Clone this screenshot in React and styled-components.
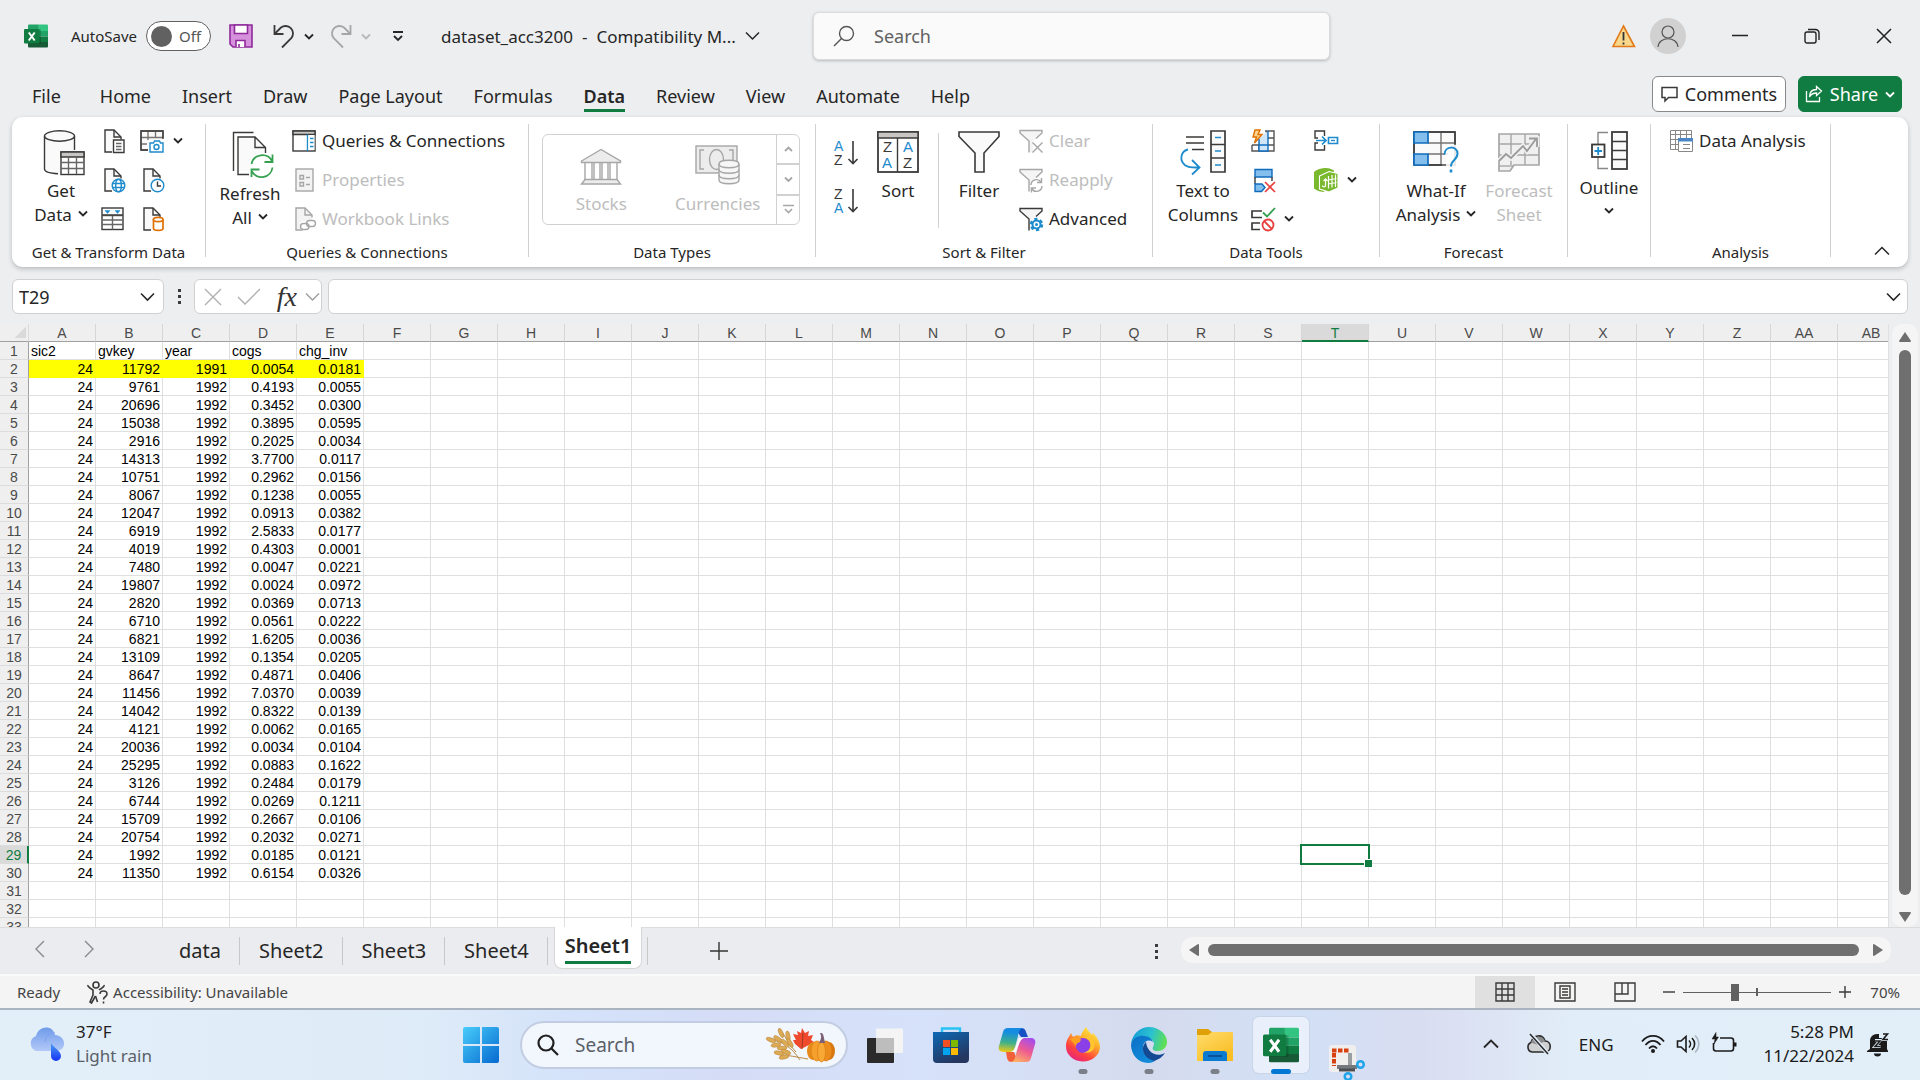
import { useState } from 'react'
import styled, { createGlobalStyle } from 'styled-components'

const INK = '#3b3a39'
const BLUE = '#1e8bcd'
const GREY = '#a6a6a6'
const GREEN = '#107c41'

const HEADINGS = ['sic2', 'gvkey', 'year', 'cogs', 'chg_inv']

const RECORDS = [
  ['24', '11792', '1991', '0.0054', '0.0181'],
  ['24', '9761', '1992', '0.4193', '0.0055'],
  ['24', '20696', '1992', '0.3452', '0.0300'],
  ['24', '15038', '1992', '0.3895', '0.0595'],
  ['24', '2916', '1992', '0.2025', '0.0034'],
  ['24', '14313', '1992', '3.7700', '0.0117'],
  ['24', '10751', '1992', '0.2962', '0.0156'],
  ['24', '8067', '1992', '0.1238', '0.0055'],
  ['24', '12047', '1992', '0.0913', '0.0382'],
  ['24', '6919', '1992', '2.5833', '0.0177'],
  ['24', '4019', '1992', '0.4303', '0.0001'],
  ['24', '7480', '1992', '0.0047', '0.0221'],
  ['24', '19807', '1992', '0.0024', '0.0972'],
  ['24', '2820', '1992', '0.0369', '0.0713'],
  ['24', '6710', '1992', '0.0561', '0.0222'],
  ['24', '6821', '1992', '1.6205', '0.0036'],
  ['24', '13109', '1992', '0.1354', '0.0205'],
  ['24', '8647', '1992', '0.4871', '0.0406'],
  ['24', '11456', '1992', '7.0370', '0.0039'],
  ['24', '14042', '1992', '0.8322', '0.0139'],
  ['24', '4121', '1992', '0.0062', '0.0165'],
  ['24', '20036', '1992', '0.0034', '0.0104'],
  ['24', '25295', '1992', '0.0883', '0.1622'],
  ['24', '3126', '1992', '0.2484', '0.0179'],
  ['24', '6744', '1992', '0.0269', '0.1211'],
  ['24', '15709', '1992', '0.2667', '0.0106'],
  ['24', '20754', '1992', '0.2032', '0.0271'],
  ['24', '1992', '1992', '0.0185', '0.0121'],
  ['24', '11350', '1992', '0.6154', '0.0326'],
]

const COLUMNS = [...'ABCDEFGHIJKLMNOPQRSTUVWXYZ', 'AA', 'AB']
const ROWS = Array.from({ length: 33 }, (_, i) => i + 1)
const MENU = ['File', 'Home', 'Insert', 'Draw', 'Page Layout', 'Formulas', 'Data', 'Review', 'View', 'Automate', 'Help']
const SHEETS = ['data', 'Sheet2', 'Sheet3', 'Sheet4', 'Sheet1']

/* ---------- icons ---------- */

function Svg({ w = 24, h = w, stroke = INK, sw = 1.4, children }) {
  return (
    <svg width={w} height={h} viewBox={`0 0 ${w} ${h}`} fill="none" stroke={stroke} strokeWidth={sw} aria-hidden="true">
      {children}
    </svg>
  )
}

const Chevron = ({ w = 10, color = '#262626', sw = 1.8, up }) => (
  <Svg w={w} h={Math.round(w / 2) + 2} stroke={color} sw={sw}>
    {up
      ? <path d={`M1 ${w / 2 + 0.5}L${w / 2} 1.5L${w - 1} ${w / 2 + 0.5}`} />
      : <path d={`M1 1.5L${w / 2} ${w / 2 + 0.5}L${w - 1} 1.5`} />}
  </Svg>
)

const ExcelIcon = ({ size = 24 }) => (
  <svg width={size} height={size} viewBox="0 0 24 24" aria-hidden="true">
    <path d="M5 1h9.500v6H5z" fill="#21a366" />
    <path d="M14.500 0.500H23a1 1 0 0 1 1 1V7h-9.500z" fill="#33c481" />
    <path d="M4 1.500a1 1 0 0 1 1-1h9.500V7H4z" fill="#21a366" />
    <path d="M4 7h10.500v5.500H4z" fill="#107c41" />
    <path d="M14.500 7H24v5.500h-9.500z" fill="#21a366" />
    <path d="M4 12.500h10.500V18H4z" fill="#185c37" />
    <path d="M14.500 12.500H24V18h-9.500z" fill="#107c41" />
    <path d="M4 18h20v4.500a1 1 0 0 1-1 1H5a1 1 0 0 1-1-1z" fill="#185c37" />
    <rect x="4" y="5.500" width="13" height="14.500" fill="#000" opacity="0.180" />
    <rect x="0" y="5" width="15.500" height="14.500" rx="1" fill="#107c41" />
    <path d="M4.800 8.500l5.900 8M10.700 8.500l-5.900 8" stroke="#fff" strokeWidth="2" fill="none" />
  </svg>
)

const SaveIcon = () => (
  <Svg stroke="#8f2a9b" sw={1.6}>
    <path d="M1 1h22v22H4l-3-3z" fill="#d591dc" />
    <path d="M5.500 1h13v8.500h-13z" fill="#fff" />
    <path d="M7 23v-6.500h9V23" fill="#fff" />
    <path d="M10 20v3" />
  </Svg>
)

const UndoIcon = () => (
  <Svg w={22} h={24} sw={1.8}>
    <path d="M1.500 1v9h9" />
    <path d="M2 9.500L8 3.500a7.500 7.500 0 0 1 10.500 10.500L9 23.500" />
  </Svg>
)

const RedoIcon = () => (
  <Svg w={22} h={24} sw={1.8} stroke={GREY}>
    <path d="M20.500 1v9h-9" />
    <path d="M20 9.500L14 3.500A7.500 7.500 0 0 0 3.500 14l9.500 9.500" />
  </Svg>
)

const PageBase = ({ color = INK, fill = '#fafafa' }) => (
  <>
    <path d="M4 1h9l7 7v15H4z" fill={fill} stroke="none" />
    <path d="M11 23H4V1h9l7 7v2.500" stroke={color} />
    <path d="M13 1v7h7" stroke={color} />
  </>
)

const DatabaseIcon = () => (
  <Svg w={48} h={45}>
    <g transform="translate(6 0)">
      <path d="M1.500 6v34c0 3 7 5 15 5h1V22h14V6z" fill="#fafafa" stroke="none" />
      <ellipse cx="16.500" cy="6" rx="15" ry="5.200" fill="#fafafa" />
      <path d="M1.500 6v33c0 2.500 5 4.300 13.500 4.800M31.500 6v14" />
      <rect x="18" y="22" width="23" height="22.500" fill="#fff" />
      <path d="M18 22h23v5H18z" fill="#c8c6c4" />
      <path d="M18 32.500h23M18 38.500h23M25.500 27v17M33.500 27v17" stroke="#666" />
    </g>
  </Svg>
)

const PageTextIcon = () => (
  <Svg>
    <PageBase />
    <path d="M12.500 11h10.500v12.500H12.500z" fill="#fff" />
    <path d="M15 14.500h5.500M15 17.500h5.500M15 20.500h5.500" stroke="#666" />
  </Svg>
)

const PageWebIcon = () => (
  <Svg>
    <PageBase />
    <circle cx="17.500" cy="17.500" r="6.300" fill="#fff" stroke={BLUE} />
    <ellipse cx="17.500" cy="17.500" rx="2.800" ry="6.300" stroke={BLUE} />
    <path d="M11.500 15.500h12M11.500 19.500h12" stroke={BLUE} />
  </Svg>
)

const TableFilterIcon = () => (
  <Svg>
    <rect x="1" y="1" width="21" height="21.500" fill="#fff" />
    <path d="M1 8.500h21M1 13h21M1 17.500h21M11.500 8.500v14" stroke="#666" />
    <path d="M1 8h21" />
    <path d="M4 3.500h5l-2.500 3zM14 3.500h5l-2.500 3z" fill={BLUE} stroke={BLUE} strokeWidth="0.500" />
  </Svg>
)

const TableCameraIcon = () => (
  <Svg>
    <path d="M1 1h22v10H9v9H1z" fill="#fafafa" stroke="none" />
    <path d="M8 21H1V2h22v7M1 8.500h22M1 15h6M8 2v9M15.500 2v7" stroke="#767472" />
    <path d="M8 21H1V2h22v8" />
    <path d="M10 14h3.500l1-2h5l1 2H23v9H10z" fill="#fff" stroke={BLUE} />
    <circle cx="16.500" cy="18" r="2.500" stroke={BLUE} />
  </Svg>
)

const PageClockIcon = () => (
  <Svg>
    <PageBase />
    <circle cx="17.500" cy="17.500" r="6.300" fill="#fff" stroke={BLUE} />
    <path d="M17.500 13.500v4.500h3.500" />
  </Svg>
)

const PageDbIcon = () => (
  <Svg>
    <PageBase />
    <path d="M13.500 12.500v9c0 2.500 9.500 2.500 9.500 0v-9" fill="#fff" stroke="#e07000" strokeWidth="1.700" />
    <ellipse cx="18.200" cy="12.500" rx="4.800" ry="2.200" fill="#fff" stroke="#e07000" strokeWidth="1.700" />
  </Svg>
)

const RefreshIcon = () => (
  <Svg w={48} h={46}>
    <g transform="translate(6 0)">
      <path d="M1.500 40V1.500h20" />
      <path d="M6 6h17l10 10v24H6z" fill="#fafafa" stroke="none" />
      <path d="M17 43.500H6V6h17l10.500 10.500V22M23 6v10.500h10.500" />
      <circle cx="30" cy="35" r="13" fill="#fff" stroke="none" />
      <path d="M19.500 33a11 11 0 0 1 20.500-3M40.500 36.500a11 11 0 0 1-20.500 4M40.500 23.500v7.500h-8M19.500 46v-7.500h8" stroke="#35a04f" strokeWidth="1.800" />
    </g>
  </Svg>
)

const PaneIcon = () => (
  <Svg>
    <rect x="1" y="2" width="22" height="20" fill="#fff" />
    <path d="M1 2h22v3.500H1z" fill="#c8c6c4" />
    <path d="M15.500 5.500V22" stroke={BLUE} />
    <path d="M16.500 6h6v15h-6z" fill="#fff" stroke="none" />
    <path d="M18 9.500h3.500M18 13.500h3.500M18 17.500h3.500" stroke={BLUE} />
  </Svg>
)

const PropertiesIcon = () => (
  <Svg stroke={GREY}>
    <rect x="4" y="1" width="17" height="22" fill="#f3f3f3" />
    <path d="M8 7.500h3.500v3.500H8zM8 14.500h3.500v3.500H8zM14 9.500h4M14 16.500h4" />
  </Svg>
)

const PageLinkIcon = () => (
  <Svg stroke={GREY}>
    <PageBase color={GREY} fill="#f3f3f3" />
    <rect x="8" y="14" width="16" height="9.500" rx="4" fill="#fff" stroke="none" />
    <rect x="8.500" y="16.500" width="8.500" height="6" rx="3" />
    <rect x="14.500" y="13.500" width="9" height="6" rx="3" />
  </Svg>
)

const BankIcon = () => (
  <Svg w={42} h={37} stroke={GREY}>
    <path d="M1.500 13L21 1.500 40.500 13v1.500h-39z" fill="#ececec" />
    <path d="M5 15v17M12 15v17M14 15v17M20 15v17M22 15v17M28 15v17M30 15v17M37 15v17" />
    <path d="M5 31.500h32l3.500 4.500h-39z" fill="#ececec" />
  </Svg>
)

const MoneyIcon = () => (
  <Svg w={46} h={40} stroke={GREY}>
    <rect x="1" y="1" width="41" height="27" fill="#ececec" />
    <path d="M9 5H5v4M5 20v4h4M34 5h4v4M5 9v11M38 9v8" />
    <ellipse cx="21.500" cy="14.500" rx="7" ry="10" />
    <path d="M24 19c0-5 20-5 20 0v16c0 5-20 5-20 0z" fill="#f6f6f6" />
    <path d="M24 19c0 5 20 5 20 0M24 24.500c0 5 20 5 20 0M24 30c0 5 20 5 20 0" />
  </Svg>
)

const Letter = ({ x, y, size = 12, color = INK, children }) => (
  <text x={x} y={y} fontFamily="Liberation Sans, sans-serif" fontSize={size} fill={color} stroke="none">{children}</text>
)

const SortIcon = ({ letters }) => (
  <Svg w={25} h={26} sw={1.6}>
    <Letter x={0} y={11} size={14} color={letters[0] === 'A' ? BLUE : INK}>{letters[0]}</Letter>
    <Letter x={0} y={25} size={14} color={letters[1] === 'A' ? BLUE : INK}>{letters[1]}</Letter>
    <path d="M19 1v22.500M14.500 19l4.500 4.500 4.500-4.500" />
  </Svg>
)

const SortDialogIcon = () => (
  <Svg w={42} h={42}>
    <rect x="1" y="1" width="40" height="40" fill="#fff" strokeWidth="1.800" />
    <path d="M1 1h40v6H1z" fill="#c8c6c4" />
    <path d="M20.500 7v34" />
    <Letter x={6} y={21} size={15}>Z</Letter>
    <Letter x={5} y={37} size={15} color={BLUE}>A</Letter>
    <Letter x={26} y={21} size={15} color={BLUE}>A</Letter>
    <Letter x={26} y={37} size={15}>Z</Letter>
  </Svg>
)

const FilterIcon = () => (
  <Svg w={42} h={43} sw={1.600}>
    <path d="M1 1h40v4.500L26 22v19h-9V22L1 5.500z" fill="#fafafa" />
  </Svg>
)

const FunnelBase = ({ color }) => (
  <>
    <path d="M1 2h22v2l-9 8v11h-4V12L1 4z" fill="#f5f5f5" stroke="none" />
    <path d="M10 23.500V12L1 4V1.500h22V4l-6 5.500" stroke={color} />
  </>
)

const ClearIcon = () => (
  <Svg stroke={GREY}><FunnelBase color={GREY} /><path d="M13.500 13.500l10 10M23.500 13.500l-10 10" /></Svg>
)

const ReapplyIcon = () => (
  <Svg stroke={GREY}>
    <FunnelBase color={GREY} />
    <circle cx="17.500" cy="17.500" r="6" fill="#fff" stroke="none" />
    <path d="M12 17a5.500 5.500 0 0 1 10-3M23 18a5.500 5.500 0 0 1-10 3M22.500 10v4.500H18M12.500 24.500V20H17" />
  </Svg>
)

const AdvancedIcon = () => (
  <Svg>
    <FunnelBase color={INK} />
    <circle cx="17.500" cy="17.500" r="5" fill="#bfe0f5" stroke={BLUE} strokeWidth="3.500" strokeDasharray="2.800 2.440" />
    <circle cx="17.500" cy="17.500" r="4" fill="#fff" stroke={BLUE} strokeWidth="2" />
    <circle cx="17.500" cy="17.500" r="1.500" fill={BLUE} stroke="none" />
  </Svg>
)

const ColumnsIcon = () => (
  <Svg w={46} h={45}>
    <path d="M6 7h18M6 13h18M12 19.500h12" />
    <path d="M31 1h14v41H31z" fill="#fafafa" strokeWidth="1.700" />
    <path d="M31 14.500h14M31 28h14" strokeWidth="1.700" />
    <path d="M35 7.500h6M35 21h6M35 35h6" stroke={BLUE} strokeWidth="1.700" />
    <path d="M8 19.500C1 21 0 29 3 33c2 3.500 6 4.500 16 4.500M12 30l7.500 7.500L12 44.500" stroke={BLUE} strokeWidth="1.800" />
  </Svg>
)

const FlashFillIcon = () => (
  <Svg>
    <path d="M12 2h11v20.500H1V16h6z" fill="#fff" stroke="none" />
    <path d="M14 2h9v20H1v-6M1 16h22M8 16v6M15.500 2v20M10 9h13" stroke="#555" />
    <path d="M8 9.500L17 2v20H8z" fill="#cfe5f8" stroke="none" />
    <path d="M8 10v12h9V2M8 16h9" stroke="#0f6cbd" />
    <path d="M4 1h5L7 5.500h4L3.500 14 5.500 8H2z" fill="#fbd48f" stroke="#e07000" />
  </Svg>
)

const RemoveDuplicatesIcon = () => (
  <Svg>
    <path d="M4 1.500h17V9H4z" fill="#83beec" stroke="#0f6cbd" />
    <path d="M4 9v7M21 9v4" />
    <path d="M4 16h7l3 3.500-3.500 4H4z" fill="#83beec" stroke="#0f6cbd" />
    <path d="M14 14l10 10M24 14L14 24" stroke="#e8403f" strokeWidth="1.700" />
  </Svg>
)

const ValidationIcon = () => (
  <Svg>
    <path d="M11 4H1v6.500h10M9 16H1v6.500h8" strokeWidth="1.700" />
    <path d="M12 5.500l4 4L24 1" stroke="#35a04f" strokeWidth="1.800" />
    <circle cx="17" cy="18" r="5.500" stroke="#e8403f" strokeWidth="1.800" />
    <path d="M13 14l8 8" stroke="#e8403f" strokeWidth="1.800" />
  </Svg>
)

const ConsolidateIcon = () => (
  <Svg>
    <path d="M10.500 7V2H1v7h3M10.500 16v5H1v-7h3" />
    <path d="M2 11.500h10M8 7.500l4 4-4 4" stroke={BLUE} strokeWidth="1.700" />
    <path d="M14.500 8.500H23.500v6H14.500z" fill="#fff" stroke={BLUE} strokeWidth="1.700" />
    <path d="M17 11.500h4" stroke={BLUE} />
  </Svg>
)

const DataModelIcon = () => (
  <Svg stroke="none">
    <path d="M0 4c4-3.500 12-5 17-3l3 1.500v5H7l-2 12 6 4.500C7 24 3 23 0 20.500z" fill="#7ab82e" />
    <path d="M5.500 8L15 3.500l9 2v14.500L15 24l-9.500-3z" fill="#7ab82e" stroke="#fff" strokeWidth="1.100" />
    <path d="M14.500 8v12.500M18 7v12.500M21.500 6.500v12.500M14.500 12l8-1.500M14.500 16l8-1.500" stroke="#fff" strokeWidth="1.200" />
    <path d="M11.500 11v6.500c0 1.800-3 1.800-3 0M9.500 13l2-2 2 2" stroke="#fff" strokeWidth="1.300" />
  </Svg>
)

const WhatIfIcon = () => (
  <Svg w={46} h={42}>
    <rect x="1" y="1" width="41" height="33" fill="#fafafa" />
    <path d="M15 12h27M1 12v11M15 23h20M28 1v33" stroke="#767472" />
    <path d="M1 34V1h41v12M15 34h14" />
    <path d="M1 1h14v11H1zM1 23h14v11H1z" fill="#83beec" stroke="#0f6cbd" strokeWidth="1.700" />
    <path d="M30 14h16v28H33V28z" fill="#fff" stroke="none" opacity="0.850" />
    <path d="M31.500 23.500c0-9 13-9 13-1 0 7-6.500 6-6.500 13" stroke={BLUE} strokeWidth="2" />
    <path d="M38 38.500v3" stroke={BLUE} strokeWidth="2.600" />
  </Svg>
)

const ForecastIcon = () => (
  <Svg w={42} h={39} stroke={GREY}>
    <path d="M1 1h40v31H16l-4 6H1z" fill="#f0f0f0" strokeWidth="1.700" />
    <path d="M1 11h40M1 22h40M13 1v31M27 1v31" />
    <path d="M1 28l7-7 5 4L25 13l4 5L38 6M31 5.500h8V14" stroke="#f0f0f0" strokeWidth="5" />
    <path d="M1 28l7-7 5 4L25 13l4 5L38 6M31 5.500h8V14" stroke="#9b9b9b" strokeWidth="1.800" />
    <path d="M1 33h15" />
  </Svg>
)

const OutlineIcon = () => (
  <Svg w={37} h={39}>
    <path d="M17 1.500H7V14M7 26v11.500h10" stroke="#8a8886" />
    <rect x="21" y="1" width="15" height="37" fill="#fafafa" strokeWidth="1.800" />
    <path d="M21 10.500h15M21 19.500h15M21 28.500h15" />
    <rect x="1" y="13.500" width="12.500" height="12.500" fill="#fff" strokeWidth="1.800" />
    <path d="M7.200 16v8M3.500 20h7.500" stroke={BLUE} strokeWidth="1.800" />
  </Svg>
)

const AnalysisIcon = () => (
  <Svg stroke="#8a8886" sw={1}>
    <path d="M1.500 1.500h21v19h-21zM1.500 5.500h21M1.500 10.500h21M1.500 15.500h21M6.500 1.500v19M11.500 1.500v19M17.500 1.500v19" />
    <path d="M9.500 9.500h14v13h-14z" fill="#fff" />
    <path d="M9 9h15v3.500H9z" fill="#4a86c5" stroke="none" />
    <path d="M14 15.500h7M14 19.500h7" />
  </Svg>
)

const CommentIcon = () => (
  <Svg w={17} h={17} sw={1.500}><path d="M1 1.500h15v10H7.500L4 15v-3.500H1z" /></Svg>
)

const ShareIcon = () => (
  <Svg w={18} h={18} stroke="#fff" sw={1.300}>
    <path d="M1.500 6v10.500h13V12" />
    <path d="M11.500 1.500l5 4.500-5 4.500V8C8 8 6 9 4.500 12c0-5 3-7.500 7-7.500z" />
  </Svg>
)

const WarningIcon = () => (
  <Svg w={24} h={24} stroke="#e07a1a" sw={1.600}>
    <path d="M11.500 2L22.500 22.500H1z" fill="#f9d78b" />
    <path d="M11.500 8v8.500M11.500 18.500v2" stroke="#333" strokeWidth="1.800" />
  </Svg>
)

const PersonIcon = () => (
  <Svg w={22} h={24} stroke="#555" sw={1.200}>
    <circle cx="11" cy="8" r="6" />
    <path d="M1 23c1-11 19-11 20 0" />
  </Svg>
)

const MagnifierIcon = ({ flip, size = 22, color = '#555', sw = 1.400 }) => (
  <svg width={size} height={size} viewBox="0 0 22 22" fill="none" stroke={color} strokeWidth={sw} aria-hidden="true">
    {flip
      ? <><circle cx="13.500" cy="8.500" r="7" /><path d="M8.500 13.500L1 21" /></>
      : <><circle cx="9" cy="9" r="7.500" /><path d="M14.500 14.500L21 21" /></>}
  </svg>
)

const AccessibilityIcon = () => (
  <Svg w={23} h={23} sw={1.600}>
    <circle cx="10" cy="4" r="3" />
    <path d="M2 4c-1 2 4 4 5 5v5l-3 7 1.500 1L9.500 15M18 4c1 2-4 4-5 5" />
    <path d="M14 13c0-4 7-4 7 0 0 3-3.500 2.500-3.500 5.500M17.500 20.500v2M9.500 15l2 6" />
  </Svg>
)

const GridViewIcon = () => (
  <Svg w={20} h={20}><path d="M1 1h18v18H1zM1 7h18M1 13h18M7 1v18M13 1v18" /></Svg>
)

const PageViewIcon = () => (
  <Svg w={22} h={20}><path d="M1 1h20v18H1zM6 4h10v12H6zM8 7h6M8 10h6M8 13h6" /></Svg>
)

const BreakViewIcon = () => (
  <Svg w={22} h={20}><path d="M1 1h20v18H1zM1 12h13V1M8 1v11" /></Svg>
)

const WeatherIcon = () => (
  <svg width="37" height="34" viewBox="0 0 37 34" aria-hidden="true">
    <defs>
      <linearGradient id="cloud" x1="0" y1="0" x2="0" y2="1"><stop stopColor="#6f9bea" /><stop offset="1" stopColor="#b3c9f8" /></linearGradient>
      <linearGradient id="drop" x1="0" y1="0" x2="0" y2="1"><stop stopColor="#4aa0f2" /><stop offset="1" stopColor="#1733f5" /></linearGradient>
    </defs>
    <path d="M8 24a8 8 0 0 1 0-15C11-2 25-2 27 8c12 1 12 16 1 16z" fill="url(#cloud)" />
    <path d="M27 6a9 9 0 0 0-10 9" fill="none" stroke="#7da3ee" />
    <path d="M23 16c3 5 10 8 10 13a5 5 0 0 1-10 0z" fill="url(#drop)" />
  </svg>
)

const StartIcon = () => (
  <svg width="36" height="36" viewBox="0 0 36 36" aria-hidden="true">
    <defs><linearGradient id="win" x1="0" y1="0" x2="1" y2="1"><stop stopColor="#48cdfb" /><stop offset="1" stopColor="#0669cf" /></linearGradient></defs>
    <path d="M2 0h15v17H0V2a2 2 0 0 1 2-2zM19 0h15a2 2 0 0 1 2 2v15H19zM0 19h17v17H2a2 2 0 0 1-2-2zM19 19h17v15a2 2 0 0 1-2 2H19z" fill="url(#win)" />
  </svg>
)

const HarvestArt = () => (
  <svg width="72" height="34" viewBox="0 0 72 34" aria-hidden="true">
    <path d="M6 12C18 14 26 20 34 32M16 4c4 6 8 14 14 20M14 27c8 0 16 2 28 4" stroke="#b98a43" fill="none" />
    <g fill="#dcab55" stroke="#b98335" strokeWidth="0.500">
      <ellipse cx="5" cy="12" rx="5" ry="2" transform="rotate(20 5 12)" />
      <ellipse cx="12" cy="11" rx="5" ry="2" transform="rotate(35 12 11)" />
      <ellipse cx="10" cy="17" rx="5" ry="2" transform="rotate(-8 10 17)" />
      <ellipse cx="19" cy="15" rx="5" ry="2" transform="rotate(45 19 15)" />
      <ellipse cx="16" cy="20" rx="5" ry="2" />
      <ellipse cx="15" cy="5" rx="5" ry="2" transform="rotate(65 15 5)" />
      <ellipse cx="22" cy="8" rx="5" ry="2" transform="rotate(80 22 8)" />
      <ellipse cx="24" cy="15" rx="5" ry="2" transform="rotate(60 24 15)" />
      <ellipse cx="13" cy="25" rx="5" ry="2" transform="rotate(10 13 25)" />
      <ellipse cx="20" cy="24" rx="5" ry="2" transform="rotate(20 20 24)" />
      <ellipse cx="18" cy="29" rx="5" ry="2" transform="rotate(-12 18 29)" />
    </g>
    <path d="M36 0l3 5 4-2-1 5 5-1-2 5 3 2-7 4-6 3-6-5-2-4 3 0-3-6 5 1-1-4 4 2z" fill="#ef4a2e" />
    <path d="M37 5l-1 16" stroke="#a13a22" />
    <ellipse cx="47" cy="23" rx="6" ry="9" fill="#e58a1b" />
    <ellipse cx="63" cy="23" rx="6" ry="9" fill="#d9780f" />
    <ellipse cx="51" cy="23" rx="6" ry="10" fill="#f5a02c" stroke="#d97d14" strokeWidth="0.700" />
    <ellipse cx="60" cy="23" rx="6" ry="10" fill="#ec8c1c" stroke="#d4740f" strokeWidth="0.700" />
    <ellipse cx="55.500" cy="24" rx="4" ry="10" fill="#f8a834" stroke="#d97d14" strokeWidth="0.700" />
    <path d="M54 5c2 4 1 6-1 10h6c-1-4-1-8-3-10z" fill="#7d6275" />
  </svg>
)

const TaskViewIcon = () => (
  <svg width="36" height="35" viewBox="0 0 36 35" aria-hidden="true">
    <rect x="0" y="10" width="27" height="25" rx="1" fill="#2b2b2b" />
    <rect x="9" y="0.500" width="27" height="24.500" rx="1" fill="#f4f4f4" />
    <path d="M9 10h18v15H9z" fill="#bdbdbd" />
  </svg>
)

const StoreIcon = () => (
  <svg width="36" height="36" viewBox="0 0 36 36" aria-hidden="true">
    <defs><linearGradient id="bag" x1="0" y1="0" x2="0.500" y2="1"><stop stopColor="#0c69b6" /><stop offset="1" stopColor="#25365f" /></linearGradient></defs>
    <path d="M9 8V1.500h18V8" fill="none" stroke="#28c3f4" strokeWidth="2.400" />
    <path d="M0 5h36v27a4 4 0 0 1-4 4H4a4 4 0 0 1-4-4z" fill="url(#bag)" />
    <path d="M10 13h7v7h-7z" fill="#f25022" /><path d="M18 13h7v7h-7z" fill="#7fba00" />
    <path d="M10 21h7v7h-7z" fill="#00a4ef" /><path d="M18 21h7v7h-7z" fill="#ffb900" />
  </svg>
)

const CopilotIcon = () => (
  <svg width="38" height="36" viewBox="0 0 38 36" aria-hidden="true">
    <defs>
      <linearGradient id="copL" x1="0.300" y1="0" x2="0.200" y2="1"><stop offset="0.150" stopColor="#138ce2" /><stop offset="0.600" stopColor="#3fb08a" /><stop offset="1" stopColor="#f3cb16" /></linearGradient>
      <linearGradient id="copR" x1="0.800" y1="0" x2="0.300" y2="1"><stop stopColor="#a34df0" /><stop offset="0.500" stopColor="#ee5b91" /><stop offset="1" stopColor="#fdb066" /></linearGradient>
    </defs>
    <path d="M17 1h6c3 0 4 1 5 4l2 5h-7z" fill="#174fc4" />
    <path d="M20 35h-6c-3 0-4-1-5-4l-1-6h8z" fill="#f2603a" />
    <path d="M10 1h16c-4 0-5 3-6 8l-3 11c-1 4-3 5-6 5H5c-4 0-5-3-4-6L5 5c1-3 2-4 5-4z" fill="url(#copL)" />
    <path d="M28 35H12c4 0 5-3 6-8l3-11c1-4 3-5 6-5h6c4 0 5 3 4 6l-4 14c-1 3-2 4-5 4z" fill="url(#copR)" />
    <path d="M21 11h5c-4 1-5 7-8 14h-5c4-1 5-7 8-14z" fill="#fff" opacity="0.900" />
  </svg>
)

const FirefoxIcon = () => (
  <svg width="34" height="36" viewBox="0 0 34 36" aria-hidden="true">
    <defs><linearGradient id="fox" x1="0.800" y1="0" x2="0.200" y2="1"><stop stopColor="#fff04a" /><stop offset="0.350" stopColor="#ffb12b" /><stop offset="0.700" stopColor="#ff453c" /><stop offset="1" stopColor="#e11f88" /></linearGradient></defs>
    <path d="M0 19C0 13 3 10 5 6l2 4c3-2 5-2 8-1 0-3 3-6 5-9 2 4 4 5 6 8l1-2c4 4 7 9 7 14a17 15 0 0 1-34-1z" fill="url(#fox)" />
    <circle cx="17" cy="18.500" r="7.500" fill="#8b3fe6" />
    <path d="M4 12c5-3 8 0 11 0l-1 3c-3 1-4 2-4 5-1-3-4-5-6-8z" fill="#ffa01f" />
    <path d="M17 11c5-2 9 4 7 10-1 3-5 5-8 4 9 3 14-3 12-9-1-5-7-8-11-5z" fill="#ffc62e" />
  </svg>
)

const EdgeIcon = () => (
  <svg width="36" height="36" viewBox="0 0 36 36" aria-hidden="true">
    <defs>
      <linearGradient id="edgeT" x1="0" y1="0.300" x2="1" y2="0.500"><stop stopColor="#159bd8" /><stop offset="0.550" stopColor="#2cc2cf" /><stop offset="1" stopColor="#63e04f" /></linearGradient>
      <linearGradient id="edgeB" x1="0" y1="0" x2="0.600" y2="1"><stop stopColor="#0b6fc4" /><stop offset="1" stopColor="#128bdb" /></linearGradient>
    </defs>
    <path d="M0 17C1 7 9 0 18 0c10 0 18 7 18 15 0 6-5 9-9 9-5 0-6-2-5-4 3-4-1-9-6-9C8 11 2 13 0 17z" fill="url(#edgeT)" />
    <path d="M0 18c1-6 7-10 13-9 5 0 8 3 9 6-4-3-9-1-10 4-1 8 6 13 12 15-2 1-4 2-7 2C7 36 0 27 0 18z" fill="url(#edgeB)" />
    <path d="M15 15c-6 5-3 16 8 19 6-2 9-5 11-8-9 5-18-1-19-11z" fill="#134a93" />
  </svg>
)

const FolderIcon = () => (
  <svg width="36" height="34" viewBox="0 0 36 34" aria-hidden="true">
    <defs><linearGradient id="fold" x1="0" y1="0" x2="0.700" y2="1"><stop stopColor="#ffdc6a" /><stop offset="1" stopColor="#f9bd25" /></linearGradient></defs>
    <path d="M0 2a1 1 0 0 1 1-1h10l4 3h20v8H0z" fill="#e0a008" />
    <path d="M0 7h11l4-3h20a1 1 0 0 1 1 1v28H0z" fill="url(#fold)" />
    <path d="M6 33v-7a3 3 0 0 1 3-3h18a3 3 0 0 1 3 3v7z" fill="#0b7ad1" />
    <path d="M11 28h14" stroke="#0a4f92" strokeWidth="1.800" />
  </svg>
)

const SnipIcon = () => (
  <svg width="36" height="34" viewBox="0 0 36 34" aria-hidden="true">
    <rect x="0" y="0" width="27" height="27" rx="3" fill="#f1eeee" />
    <path d="M3 5.500h17M5 8v13" stroke="#d9400f" strokeWidth="4" strokeDasharray="4.500 1.500" />
    <path d="M21 8v18" stroke="#9a9da2" strokeWidth="4" />
    <path d="M8 22h20" stroke="#75787d" strokeWidth="4" />
    <path d="M10 25h16" stroke="#4c4f54" strokeWidth="3" />
    <g fill="none" stroke="#20a4ea" strokeWidth="2.500"><circle cx="31.500" cy="19.500" r="3.300" /><circle cx="19" cy="31.500" r="3.300" /></g>
  </svg>
)

const CloudOffIcon = () => (
  <Svg w={26} h={24} stroke="#2b2b2b" sw={1.600}>
    <path d="M6 20a5 5 0 0 1-1-9.500C7 2 17 2 19 9c7 0 7 11 0 11z" fill="#cfd0d2" />
    <path d="M5 10.500c2-7 12-8 14-1.500l-7 4z" fill="#8b8c8e" stroke="none" />
    <path d="M4 1l18 21" stroke="#e1ecf7" strokeWidth="4" />
    <path d="M4 2l18 20" />
  </Svg>
)

const WifiIcon = () => (
  <Svg w={24} h={20} stroke="#1b1b1b" sw={1.800}>
    <path d="M1 7.500C7 0 17 0 23 7.500M4.500 11C9 5.500 15 5.500 19.500 11M8 14.500c2.500-3 5.500-3 8 0" />
    <circle cx="12" cy="17" r="2" fill="#1b1b1b" stroke="none" />
  </Svg>
)

const VolumeIcon = () => (
  <Svg w={24} h={20} stroke="#1b1b1b" sw={1.600}>
    <path d="M1.500 7v6H5l5 4.500v-15L5 7z" />
    <path d="M13 6.500c2 2 2 5 0 7M16 4c3.500 3.500 3.500 8.500 0 12" />
    <path d="M19 1.500c5 5 5 12 0 17" stroke="#aab6c4" />
  </Svg>
)

const BatteryIcon = () => (
  <Svg w={26} h={24} stroke="#1b1b1b" sw={1.600}>
    <path d="M9 6h11a2.500 2.500 0 0 1 2.500 2.500v8A2.500 2.500 0 0 1 20 19H5a2.500 2.500 0 0 1-2.500-2.500V11" />
    <path d="M24 10.500v4" strokeWidth="3" />
    <path d="M5 0.500L1 7h3l-1 5 4.500-7H5z" fill="#1b1b1b" strokeWidth="0.500" />
  </Svg>
)

const BellIcon = () => (
  <svg width="22" height="24" viewBox="0 0 22 24" aria-hidden="true">
    <path d="M3 17V9c0-4 3-7 7-7h2v4h8v11l1 2v1H0v-1z" fill="#1b1b1b" />
    <path d="M7 21.500h7a3.500 3 0 0 1-7 0z" fill="#1b1b1b" />
    <path d="M8 8.500h5l-5 6h5.500M16 2h4.500L16 7.500h5" fill="none" stroke="#e1edf8" strokeWidth="3" />
    <path d="M16 2h4.500L16 7.500h5" fill="none" stroke="#1b1b1b" strokeWidth="1.600" />
    <path d="M8 9h5l-5 5.500h5.500" fill="none" stroke="#1b1b1b" strokeWidth="1.500" />
  </svg>
)

/* ---------- pieces ---------- */

function BigButton({ icon, lines, width, iconHeight, arrow, disabled }) {
  return (
    <Big type="button" $w={width} disabled={disabled}>
      <BigIcon $h={iconHeight}>{icon}</BigIcon>
      {lines.map((line, i) => (
        <BigLine key={line}>{line}{arrow && i === lines.length - 1 && <Chevron />}</BigLine>
      ))}
    </Big>
  )
}

function IconButton({ icon, label, arrow }) {
  return <Small type="button" aria-label={label}>{icon}{arrow && <Chevron />}</Small>
}

function RowButton({ icon, label, disabled }) {
  return <Small type="button" disabled={disabled}>{icon}<span>{label}</span></Small>
}

function TitleBar() {
  const [auto, setAuto] = useState(false)

  return (
    <Title>
      <TitleLeft>
        <ExcelIcon />
        <AutoSave>
          AutoSave
          <Toggle $on={auto}>
            <input type="checkbox" aria-label="AutoSave" checked={auto} onChange={() => setAuto(!auto)} />
            <span>{auto ? 'On' : 'Off'}</span>
          </Toggle>
        </AutoSave>
        <Plain type="button" aria-label="Save"><SaveIcon /></Plain>
        <Split type="button" aria-label="Undo"><UndoIcon /><Chevron /></Split>
        <Split type="button" aria-label="Redo" disabled><RedoIcon /><Chevron color="#b8b8b8" /></Split>
        <Plain type="button" aria-label="Customize toolbar">
          <Svg w={12} h={12} stroke="#262626" sw={1.800}><path d="M1 2h10M2 6l4 4 4-4" /></Svg>
        </Plain>
        <FileName type="button">
          <span>dataset_acc3200</span><span>-</span><span>Compatibility M...</span>
          <Chevron w={15} sw={1.500} />
        </FileName>
      </TitleLeft>
      <SearchBox>
        <MagnifierIcon flip />
        <input type="search" placeholder="Search" aria-label="Search" />
      </SearchBox>
      <TitleRight>
        <WarningIcon />
        <Avatar type="button" aria-label="Account"><PersonIcon /></Avatar>
        <WindowButton type="button" aria-label="Minimize"><Svg w={16} stroke="#222" sw={1.500}><path d="M0 7.500h16" /></Svg></WindowButton>
        <WindowButton type="button" aria-label="Restore">
          <Svg w={16} stroke="#222" sw={1.400}><rect x="1" y="4" width="11" height="11" rx="2" /><path d="M4 1.500h7.500a3.500 3.500 0 0 1 3.500 3.500V12" /></Svg>
        </WindowButton>
        <WindowButton type="button" aria-label="Close"><Svg w={16} stroke="#222" sw={1.500}><path d="M1 1l14 14M15 1L1 15" /></Svg></WindowButton>
      </TitleRight>
    </Title>
  )
}

function Ribbon() {
  return (
    <RibbonCard>
      <Group $w={193} $pad={16}>
        <GroupBody>
          <BigButton icon={<DatabaseIcon />} lines={['Get', 'Data']} width={66} arrow />
          <Stack $left={7} $w={39}>
            <IconButton icon={<PageTextIcon />} label="From Text/CSV" />
            <IconButton icon={<PageWebIcon />} label="From Web" />
            <IconButton icon={<TableFilterIcon />} label="From Table/Range" />
          </Stack>
          <Stack>
            <IconButton icon={<TableCameraIcon />} label="From Picture" arrow />
            <IconButton icon={<PageClockIcon />} label="Recent Sources" />
            <IconButton icon={<PageDbIcon />} label="Existing Connections" />
          </Stack>
        </GroupBody>
        <GroupLabel>Get &amp; Transform Data</GroupLabel>
      </Group>
      <Divider />
      <Group $w={322} $pad={11}>
        <GroupBody>
          <BigButton icon={<RefreshIcon />} lines={['Refresh', 'All']} width={66} iconHeight={49} arrow />
          <Stack $left={9}>
            <RowButton icon={<PaneIcon />} label="Queries & Connections" />
            <RowButton icon={<PropertiesIcon />} label="Properties" disabled />
            <RowButton icon={<PageLinkIcon />} label="Workbook Links" disabled />
          </Stack>
        </GroupBody>
        <GroupLabel>Queries &amp; Connections</GroupLabel>
      </Group>
      <Divider />
      <Group $w={286} $pad={13}>
        <GroupBody>
          <Gallery>
            <GalleryItem type="button" disabled><BankIcon />Stocks</GalleryItem>
            <GalleryItem type="button" disabled><MoneyIcon />Currencies</GalleryItem>
            <GallerySteps>
              <button type="button" aria-label="Previous row"><Chevron w={9} up color={GREY} /></button>
              <button type="button" aria-label="Next row"><Chevron w={9} color={GREY} /></button>
              <button type="button" aria-label="More"><Svg w={11} h={11} stroke={GREY} sw={1.600}><path d="M0 1.500h11M2 5l3.500 3.500L9 5" /></Svg></button>
            </GallerySteps>
          </Gallery>
        </GroupBody>
        <GroupLabel>Data Types</GroupLabel>
      </Group>
      <Divider />
      <Group $w={336} $pad={18}>
        <GroupBody>
          <SortPair>
            <button type="button" aria-label="Sort A to Z"><SortIcon letters="AZ" /></button>
            <button type="button" aria-label="Sort Z to A"><SortIcon letters="ZA" /></button>
          </SortPair>
          <BigButton icon={<SortDialogIcon />} lines={['Sort']} width={56} />
          <InnerDivider />
          <BigButton icon={<FilterIcon />} lines={['Filter']} width={60} />
          <Stack $left={10}>
            <RowButton icon={<ClearIcon />} label="Clear" disabled />
            <RowButton icon={<ReapplyIcon />} label="Reapply" disabled />
            <RowButton icon={<AdvancedIcon />} label="Advanced" />
          </Stack>
        </GroupBody>
        <GroupLabel>Sort &amp; Filter</GroupLabel>
      </Group>
      <Divider />
      <Group $w={226} $pad={10}>
        <GroupBody>
          <BigButton icon={<ColumnsIcon />} lines={['Text to', 'Columns']} width={80} />
          <Stack $left={8} $w={63}>
            <IconButton icon={<FlashFillIcon />} label="Flash Fill" />
            <IconButton icon={<RemoveDuplicatesIcon />} label="Remove Duplicates" />
            <IconButton icon={<ValidationIcon />} label="Data Validation" arrow />
          </Stack>
          <Stack>
            <IconButton icon={<ConsolidateIcon />} label="Consolidate" />
            <IconButton icon={<DataModelIcon />} label="Data Model" arrow />
          </Stack>
        </GroupBody>
        <GroupLabel>Data Tools</GroupLabel>
      </Group>
      <Divider />
      <Group $w={187} $pad={12}>
        <GroupBody>
          <BigButton icon={<WhatIfIcon />} lines={['What-If', 'Analysis']} width={88} arrow />
          <BigButton icon={<ForecastIcon />} lines={['Forecast', 'Sheet']} width={78} disabled />
        </GroupBody>
        <GroupLabel>Forecast</GroupLabel>
      </Group>
      <Divider />
      <Group $w={82} $pad={4}>
        <GroupBody>
          <Big type="button" $w={74}>
            <BigIcon $h={43}><OutlineIcon /></BigIcon>
            <BigLine>Outline</BigLine>
            <Chevron />
          </Big>
        </GroupBody>
      </Group>
      <Divider />
      <Group $w={179} $pad={18}>
        <GroupBody>
          <Stack><RowButton icon={<AnalysisIcon />} label="Data Analysis" /></Stack>
        </GroupBody>
        <GroupLabel>Analysis</GroupLabel>
      </Group>
      <Divider />
      <Collapse type="button" aria-label="Collapse ribbon"><Chevron w={16} up sw={1.500} /></Collapse>
    </RibbonCard>
  )
}

function FormulaBar() {
  return (
    <Formula>
      <NameBox>
        <input aria-label="Name box" defaultValue="T29" />
        <Chevron w={15} sw={1.600} />
      </NameBox>
      <Dots><i /><i /><i /></Dots>
      <FxBox>
        <button type="button" aria-label="Cancel"><Svg w={18} stroke="#b0b0b0"><path d="M1 1l16 16M17 1L1 17" /></Svg></button>
        <button type="button" aria-label="Enter"><Svg w={24} h={18} stroke="#b0b0b0"><path d="M1 9l7 7L23 1" /></Svg></button>
        <button type="button" aria-label="Insert function"><em>fx</em><Chevron w={15} color="#a0a0a0" sw={1.500} /></button>
      </FxBox>
      <FormulaInput>
        <input aria-label="Formula" />
        <Chevron w={15} sw={1.600} />
      </FormulaInput>
    </Formula>
  )
}

function Sheet() {
  return (
    <SheetArea>
      <SheetClip>
        <Table>
          <colgroup>
            <col width="29" />
            {COLUMNS.map(c => <col key={c} width="67" />)}
          </colgroup>
          <thead>
            <tr>
              <Corner aria-label="Select all" />
              {COLUMNS.map(c => <ColHead key={c} scope="col" $active={c === 'T'}>{c}</ColHead>)}
            </tr>
          </thead>
          <tbody>
            {ROWS.map(n => {
              const values = n === 1 ? HEADINGS : RECORDS[n - 2] || []
              return (
                <tr key={n}>
                  <RowHead scope="row" $active={n === 29}>{n}</RowHead>
                  {COLUMNS.map((c, i) => (
                    <Cell key={c} $text={n === 1} $mark={n === 2 && i < 5} $selected={n === 29 && c === 'T'}>{values[i]}</Cell>
                  ))}
                </tr>
              )
            })}
          </tbody>
        </Table>
      </SheetClip>
      <VScroll>
        <Svg w={14} h={12} stroke="none"><path d="M7 1l6 9q0 1-1 1H2q-1 0-1-1z" fill="#6f6f6f" /></Svg>
        <VThumb />
        <Svg w={14} h={12} stroke="none"><path d="M7 11L1 2q0-1 1-1h10q1 0 1 1z" fill="#6f6f6f" /></Svg>
      </VScroll>
    </SheetArea>
  )
}

function SheetTabs() {
  const [active, setActive] = useState('Sheet1')

  return (
    <TabBar>
      <TabNav>
        <button type="button" aria-label="Previous sheet"><Svg w={10} h={18} stroke="#8a8a8a"><path d="M9 1L1 9l8 8" /></Svg></button>
        <button type="button" aria-label="Next sheet"><Svg w={10} h={18} stroke="#8a8a8a"><path d="M1 1l8 8-8 8" /></Svg></button>
      </TabNav>
      {SHEETS.map(name => (
        <SheetTab key={name} type="button" $active={name === active} onClick={() => setActive(name)}><span>{name}</span></SheetTab>
      ))}
      <AddSheet type="button" aria-label="New sheet"><Svg w={18} stroke="#333"><path d="M9 0v18M0 9h18" /></Svg></AddSheet>
      <TabDots><i /><i /><i /></TabDots>
      <HScroll>
        <Svg w={12} h={14} stroke="none"><path d="M1 7l9-6q1 0 1 1v10q0 1-1 1z" fill="#6f6f6f" /></Svg>
        <HThumb />
        <Svg w={12} h={14} stroke="none"><path d="M11 7L2 1Q1 1 1 2v10q0 1 1 1z" fill="#6f6f6f" /></Svg>
      </HScroll>
    </TabBar>
  )
}

function StatusBar() {
  const [zoom, setZoom] = useState(34)

  return (
    <Status>
      <span>Ready</span>
      <StatusItem type="button"><AccessibilityIcon />Accessibility: Unavailable</StatusItem>
      <StatusRight>
        <ViewButton type="button" aria-label="Normal" $active><GridViewIcon /></ViewButton>
        <ViewButton type="button" aria-label="Page Layout"><PageViewIcon /></ViewButton>
        <ViewButton type="button" aria-label="Page Break Preview"><BreakViewIcon /></ViewButton>
        <ZoomStep type="button" aria-label="Zoom out"><Svg w={12}><path d="M0 6h12" /></Svg></ZoomStep>
        <ZoomRange type="range" aria-label="Zoom" value={zoom} onChange={e => setZoom(Number(e.target.value))} />
        <ZoomStep type="button" aria-label="Zoom in"><Svg w={12}><path d="M0 6h12M6 0v12" /></Svg></ZoomStep>
        <ZoomValue>70%</ZoomValue>
      </StatusRight>
    </Status>
  )
}

function Taskbar() {
  return (
    <Bar>
      <Weather type="button">
        <WeatherIcon />
        <span><b>37°F</b>Light rain</span>
      </Weather>
      <AppButton type="button" aria-label="Start"><StartIcon /></AppButton>
      <TaskSearch>
        <MagnifierIcon size={22} color="#1f1f1f" sw={2.200} />
        <input type="search" placeholder="Search" aria-label="Search Windows" />
        <HarvestArt />
      </TaskSearch>
      <AppButton type="button" aria-label="Task view"><TaskViewIcon /></AppButton>
      <AppButton type="button" aria-label="Microsoft Store"><StoreIcon /></AppButton>
      <AppButton type="button" aria-label="Copilot"><CopilotIcon /></AppButton>
      <AppButton type="button" aria-label="Firefox" $running><FirefoxIcon /></AppButton>
      <AppButton type="button" aria-label="Edge" $running><EdgeIcon /></AppButton>
      <AppButton type="button" aria-label="File Explorer" $running><FolderIcon /></AppButton>
      <AppButton type="button" aria-label="Excel" $running $active><ExcelIcon size={36} /></AppButton>
      <AppButton type="button" aria-label="Snipping Tool" $low><SnipIcon /></AppButton>
      <Tray>
        <button type="button" aria-label="Hidden icons"><Chevron w={16} up sw={1.800} /></button>
        <button type="button" aria-label="OneDrive"><CloudOffIcon /></button>
        <button type="button">ENG</button>
        <QuickSettings type="button" aria-label="Quick settings"><WifiIcon /><VolumeIcon /><BatteryIcon /></QuickSettings>
        <Clock>
          <time>5:28 PM</time>
          <time>11/22/2024</time>
        </Clock>
        <BellIcon />
      </Tray>
    </Bar>
  )
}

export default function App() {
  const [tab, setTab] = useState('Data')

  return (
    <Window>
      <Reset />
      <TitleBar />
      <Menu>
        {MENU.map(m => (
          <MenuTab key={m} type="button" $active={m === tab} onClick={() => setTab(m)}>{m}</MenuTab>
        ))}
        <Actions>
          <Comments type="button"><CommentIcon />Comments</Comments>
          <Share type="button"><ShareIcon />Share<Chevron color="#fff" /></Share>
        </Actions>
      </Menu>
      <Ribbon />
      <FormulaBar />
      <Sheet />
      <SheetTabs />
      <StatusBar />
      <Taskbar />
    </Window>
  )
}

/* ---------- styles ---------- */

const Reset = createGlobalStyle`
  * { box-sizing: border-box; }
  body {
    margin: 0;
    font-family: 'Noto Sans', 'Open Sans', sans-serif;
    color: #262626;
    background: #edeef0;
  }
  svg { display: block; flex: none; overflow: visible; }
  button, input { font: inherit; color: inherit; }
  button {
    background: none;
    border: none;
    padding: 0;
    white-space: nowrap;
  }
  input { outline: none; }
`

const Window = styled.div`
  height: 100vh;
  display: flex;
  flex-direction: column;
  overflow: hidden;
`

const Title = styled.header`
  flex: none;
  height: 74px;
  display: flex;
  align-items: flex-start;
`

const TitleLeft = styled.div`
  flex: 0 0 813px;
  height: 72px;
  padding-left: 24px;
  display: flex;
  align-items: center;
`

const AutoSave = styled.div`
  display: flex;
  align-items: center;
  gap: 9px;
  margin-left: 23px;
  margin-right: 18px;
  font-size: 15px;
`

const Toggle = styled.label`
  width: 65px;
  height: 30px;
  padding: 0 9px 0 4px;
  display: flex;
  flex-direction: ${p => p.$on ? 'row-reverse' : 'row'};
  align-items: center;
  justify-content: space-between;
  border: 1px solid #616161;
  border-radius: 15px;
  background: #fff;
  color: #555;

  input {
    appearance: none;
    width: 21px;
    height: 21px;
    margin: 0;
    border-radius: 11px;
    background: #616161;
  }
`

const Plain = styled.button`
  display: flex;
`

const Split = styled.button`
  display: flex;
  align-items: center;
  gap: 9px;
  margin-left: 20px;

  & + & { margin-left: 16px; }
  & + ${Plain} { margin-left: 21px; }
`

const FileName = styled.button`
  display: flex;
  align-items: center;
  gap: 9px;
  margin-left: 37px;
  font-size: 17px;
`

const SearchBox = styled.label`
  flex: 0 1 517px;
  min-width: 0;
  height: 48px;
  margin-top: 12px;
  padding-left: 19px;
  display: flex;
  align-items: center;
  gap: 19px;
  background: #fafafa;
  border: 1px solid #dcdcdc;
  border-radius: 6px;
  box-shadow: 0 1px 3px #0000003a;

  input {
    flex: 1;
    min-width: 0;
    border: none;
    background: none;
    padding: 0;
    font-size: 18px;
  }
  input::placeholder { color: #616161; opacity: 1; }
`

const TitleRight = styled.div`
  height: 72px;
  margin-left: auto;
  display: flex;
  align-items: center;
`

const Avatar = styled.button`
  width: 36px;
  height: 36px;
  margin: 0 18px 0 14px;
  display: grid;
  place-items: center;
  border-radius: 18px;
  background: #d1d1d1;
`

const WindowButton = styled.button`
  width: 72px;
  height: 48px;
  display: grid;
  place-items: center;
`

const Menu = styled.nav`
  flex: none;
  height: 43px;
  padding: 0 18px 0 17px;
  display: flex;
  align-items: flex-start;
`

const MenuTab = styled.button`
  height: 38px;
  margin: 0 16px 0 15px;
  padding-top: 8px;
  font-size: 18px;
  line-height: 28px;
  font-weight: ${p => p.$active ? 600 : 400};
  border-bottom: 3px solid ${p => p.$active ? GREEN : 'transparent'};
  display: flex;
  align-items: flex-start;

  &:first-child { margin-right: 24px; }
`

const Actions = styled.div`
  margin-left: auto;
  padding-top: 2px;
  display: flex;
  gap: 12px;
`

const Comments = styled.button`
  width: 134px;
  height: 36px;
  display: flex;
  align-items: center;
  justify-content: center;
  gap: 7px;
  font-size: 18px;
  border: 1px solid #8a8a8a;
  border-radius: 6px;
  background: #fff;
`

const Share = styled(Comments)`
  width: 104px;
  border-color: ${GREEN};
  background: ${GREEN};
  color: #fff;
`

const RibbonCard = styled.section`
  flex: none;
  height: 150px;
  margin: 0 12px;
  display: flex;
  background: #fff;
  border-radius: 11px;
  box-shadow: 0 2px 5px #00000038;
`

const Group = styled.div`
  flex: 0 0 ${p => p.$w}px;
  display: flex;
  flex-direction: column;
  padding-bottom: 5px;

  & > :first-child { padding-left: ${p => p.$pad}px; }
`

const GroupBody = styled.div`
  flex: 1;
  display: flex;
  align-items: flex-start;
`

const GroupLabel = styled.div`
  font-size: 15px;
  line-height: 20px;
  text-align: center;
`

const Divider = styled.div`
  flex: none;
  width: 1px;
  margin: 7px 0 10px;
  background: #d1d1d1;
`

const InnerDivider = styled.div`
  width: 1px;
  height: 95px;
  margin: 16px 10px 0 12px;
  background: #d1d1d1;
`

const Big = styled.button`
  width: ${p => p.$w}px;
  padding-top: 12px;
  display: flex;
  flex-direction: column;
  align-items: center;
  font-size: 17px;

  & > svg { margin-top: 7px; }
  &:disabled { color: #bdbdbd; }
`

const BigIcon = styled.span`
  height: ${p => p.$h || 46}px;
  margin-bottom: 4px;
  display: flex;
  align-items: center;
`

const BigLine = styled.span`
  display: flex;
  align-items: center;
  gap: 6px;
  line-height: 24px;

  svg { margin-bottom: 3px; }
`

const Stack = styled.div`
  width: ${p => p.$w ? p.$w + 'px' : 'auto'};
  margin-left: ${p => p.$left || 0}px;
  padding-top: 4px;
  display: flex;
  flex-direction: column;
  align-items: flex-start;
`

const Small = styled.button`
  height: 39px;
  display: flex;
  align-items: center;
  gap: 6px;
  font-size: 17px;

  & > svg + svg { margin-left: 3px; }
  &:disabled { color: #bdbdbd; }
`

const Gallery = styled.div`
  width: 258px;
  height: 91px;
  margin-top: 17px;
  display: flex;
  border: 1px solid #d1d1d1;
  border-radius: 6px;
`

const GalleryItem = styled.button`
  flex: 1;
  padding: 0 0 7px;
  display: flex;
  flex-direction: column;
  align-items: center;
  justify-content: flex-end;
  gap: 6px;
  font-size: 17px;
  line-height: 26px;

  &:disabled { color: #bdbdbd; }
`

const GallerySteps = styled.div`
  flex: 0 0 23px;
  display: flex;
  flex-direction: column;
  border-left: 1px solid #d1d1d1;

  button {
    flex: 1;
    display: grid;
    place-items: center;
  }
  button + button { border-top: 2px solid #d1d1d1; }
`

const SortPair = styled.div`
  width: 36px;
  padding-top: 23px;
  display: flex;
  flex-direction: column;
  gap: 22px;
`

const Collapse = styled.button`
  margin: auto 18px 11px auto;
`

const Formula = styled.div`
  flex: none;
  height: 57px;
  padding: 12px 12px 0;
  display: flex;
`

const Field = styled.div`
  height: 35px;
  display: flex;
  align-items: center;
  background: #fff;
  border: 1px solid #d1d1d1;
  border-radius: 6px;
`

const NameBox = styled(Field)`
  width: 152px;
  padding: 0 8px 0 6px;

  input {
    flex: 1;
    min-width: 0;
    padding: 0;
    border: none;
    font-size: 18px;
  }
`

const Dots = styled.div`
  width: 30px;
  height: 35px;
  display: flex;
  flex-direction: column;
  align-items: center;
  justify-content: center;
  gap: 3px;

  i {
    width: 3px;
    height: 3px;
    background: #3b3b3b;
  }
`

const FxBox = styled(Field)`
  width: 128px;
  margin-right: 6px;
  padding: 0 1px 0 9px;
  justify-content: space-between;

  button {
    display: flex;
    align-items: center;
    gap: 8px;
  }
  em {
    font: italic 400 28px/30px 'Liberation Serif', serif;
    color: #333;
  }
`

const FormulaInput = styled(Field)`
  flex: 1;
  padding-right: 6px;

  input {
    flex: 1;
    border: none;
    background: none;
  }
`

const SheetArea = styled.main`
  flex: 1;
  min-height: 0;
  display: flex;
  gap: 3px;
`

const SheetClip = styled.div`
  flex: 1;
  min-width: 0;
  overflow: hidden;
  background: #fff;
  border-right: 1px solid #e0e0e0;
`

const Table = styled.table`
  width: 1905px;
  table-layout: fixed;
  border-collapse: separate;
  border-spacing: 0;
  font: 14px/15px 'Liberation Sans', Arial, sans-serif;

  th {
    padding: 2px 0 0;
    font-weight: 400;
    color: #4a4a4a;
    background: #efefef;
  }
`

const Corner = styled.td`
  height: 18px;
  padding: 0;
  border-right: 1px solid #dcdcdc;
  border-bottom: 1px solid #a0a0a0;
  background: linear-gradient(135deg, #efefef 50%, #dadada 50%);
  background-size: 12px 11px;
  background-position: 14px 3px;
  background-repeat: no-repeat;
  background-color: #efefef;
`

const ColHead = styled.th`
  height: 18px;
  border-right: 1px solid #d6d6d6;
  border-bottom: 1px solid #a0a0a0;

  ${p => p.$active && `
    && { background: #dadada; color: ${GREEN}; }
    border-bottom: 2px solid ${GREEN};
    line-height: 14px;
  `}
`

const RowHead = styled.th`
  height: 18px;
  border-right: 1px solid #a0a0a0;
  border-bottom: 1px solid #dcdcdc;

  ${p => p.$active && `
    && { background: #dadada; color: ${GREEN}; }
    border-right: 2px solid ${GREEN};
  `}
`

const Cell = styled.td`
  position: relative;
  z-index: ${p => p.$selected ? 1 : 'auto'};
  height: 18px;
  padding: 2px 2px 0;
  text-align: ${p => p.$text ? 'left' : 'right'};
  color: #000;
  background: ${p => p.$mark ? '#ffff00' : '#fff'};
  border-right: 1px solid ${p => p.$mark ? '#ffff00' : '#dfdfdf'};
  border-bottom: 1px solid ${p => p.$mark ? '#ffff00' : '#dfdfdf'};

  ${p => p.$selected && `
    &::before {
      content: '';
      position: absolute;
      inset: -2px;
      border: 2px solid ${GREEN};
    }
    &::after {
      content: '';
      position: absolute;
      right: -4px;
      bottom: -4px;
      width: 7px;
      height: 7px;
      background: ${GREEN};
      border: solid #fff;
      border-width: 1px 0 0 1px;
    }
  `}
`

const VScroll = styled.div`
  flex: 0 0 26px;
  margin-right: 2px;
  padding: 7px 0 4px;
  display: flex;
  flex-direction: column;
  align-items: center;
  background: #f5f5f5;
  border-radius: 10px;
`

const VThumb = styled.div`
  flex: 1;
  width: 12px;
  margin: 7px 0 16px;
  border-radius: 6px;
  background: #6f6f6f;
`

const TabBar = styled.div`
  flex: none;
  height: 49px;
  display: flex;
  background: #ebecef;
  border-top: 1px solid #dcdcdc;
  border-bottom: 2px solid #fafafa;
`

const TabNav = styled.div`
  width: 160px;
  padding: 12px 0 0 35px;
  display: flex;
  align-items: flex-start;
  gap: 39px;
`

const SheetTab = styled.button`
  height: 46px;
  padding: 0 19px;
  font-size: 20px;
  line-height: 46px;
  background: linear-gradient(#c8c8c8, #c8c8c8) right 9px / 1px 28px no-repeat;

  ${p => p.$active && `
    height: 42px;
    margin: -1px 5px 0 6px;
    padding: 0 10px;
    font-weight: 600;
    line-height: 30px;
    background: #fff;
    border: solid #d6d6d6;
    border-width: 0 1px 1px;
    border-radius: 0 0 8px 8px;

    span {
      display: block;
      border-bottom: 3px solid ${GREEN};
    }
  `}
`

const AddSheet = styled.button`
  height: 28px;
  margin-top: 9px;
  padding-left: 62px;
  display: flex;
  align-items: center;
  border-left: 1px solid #c8c8c8;
`

const TabDots = styled(Dots)`
  height: 46px;
  margin-left: auto;
`

const HScroll = styled.div`
  flex: 0 0 37%;
  height: 26px;
  margin: 9px 29px 0 9px;
  padding: 0 7px;
  display: flex;
  align-items: center;
  background: #f5f5f5;
  border-radius: 12px;
`

const HThumb = styled.div`
  flex: 1;
  height: 12px;
  margin: 0 13px 0 8px;
  border-radius: 6px;
  background: #6f6f6f;
`

const Status = styled.footer`
  flex: none;
  height: 34px;
  padding-left: 17px;
  display: flex;
  align-items: center;
  gap: 26px;
  font-size: 15px;
  color: #444;
  background: #f4f4f4;
  border-bottom: 2px solid #a9b4c0;
`

const StatusItem = styled.button`
  display: flex;
  align-items: center;
  gap: 4px;
`

const StatusRight = styled.div`
  height: 32px;
  margin-left: auto;
  padding-right: 20px;
  display: flex;
  align-items: center;
`

const ViewButton = styled.button`
  width: 60px;
  height: 32px;
  display: grid;
  place-items: center;
  background: ${p => p.$active ? '#e0e0e0' : 'none'};
`

const ZoomStep = styled.button`
  margin: 0 8px;
`

const ZoomRange = styled.input`
  appearance: none;
  width: 148px;
  height: 17px;
  margin: 0;
  background:
    linear-gradient(#616161, #616161) center / 100% 1px no-repeat,
    linear-gradient(#616161, #616161) center / 2px 8px no-repeat;

  &::-webkit-slider-thumb {
    appearance: none;
    width: 8px;
    height: 17px;
    background: #616161;
  }
`

const ZoomValue = styled.span`
  width: 41px;
  text-align: right;
`

const Bar = styled.footer`
  flex: none;
  height: 70px;
  display: flex;
  align-items: center;
  background: linear-gradient(90deg, #e3eff8 0%, #deebf8 22%, #d4e2fa 30%, #d5dcf6 38%, #d6e2fa 48%, #d5dbee 60%, #d2e0f6 68%, #d9ddf1 74%, #e1edf8 82%, #e2eff8 100%);
`

const Weather = styled.button`
  flex: 0 0 448px;
  padding: 0 0 2px 28px;
  display: flex;
  align-items: center;
  gap: 11px;
  font-size: 17px;
  line-height: 24px;
  text-align: left;
  color: #5a6068;

  b {
    display: block;
    font-weight: 400;
    color: #1f1f1f;
  }
`

const AppButton = styled.button`
  position: relative;
  flex: none;
  width: ${p => p.$active ? 56 : 66}px;
  height: 56px;
  margin: ${p => p.$active ? '0 5px' : 0};
  padding-top: ${p => p.$low ? 28 : 0}px;
  display: grid;
  place-items: center;
  border-radius: 6px;
  background: ${p => p.$active ? '#eaf0fb' : 'none'};
  box-shadow: ${p => p.$active ? '0 0 0 1px #c9d4e6' : 'none'};

  ${p => p.$running && `
    &::after {
      content: '';
      position: absolute;
      left: 50%;
      bottom: -1px;
      width: ${p.$active ? 20 : 9}px;
      height: 5px;
      border-radius: 3px;
      background: ${p.$active ? '#0078d4' : '#7b7f88'};
      transform: translateX(-50%);
    }
  `}
`

const TaskSearch = styled.label`
  flex: 0 0 328px;
  min-width: 0;
  width: 328px;
  height: 48px;
  margin: 0 4px 0 6px;
  padding: 0 8px 0 15px;
  display: flex;
  align-items: center;
  gap: 16px;
  border: 2px solid #c3cde2;
  border-radius: 24px;
  background: #f2f6fd;

  input {
    flex: 1 1 0;
    width: 0;
    min-width: 0;
    padding: 0;
    border: none;
    background: none;
    font-size: 19px;
  }
  input::placeholder { color: #5a6068; opacity: 1; }
`

const Tray = styled.div`
  margin-left: auto;
  padding: 0 31px 2px 0;
  display: flex;
  align-items: center;
  gap: 27px;
  font-size: 17px;
  color: #1b1b1b;
`

const QuickSettings = styled.button`
  display: flex;
  align-items: center;
  gap: 11px;
`

const Clock = styled.div`
  display: flex;
  flex-direction: column;
  align-items: flex-end;
  line-height: 24px;
  margin-right: -14px;
`
